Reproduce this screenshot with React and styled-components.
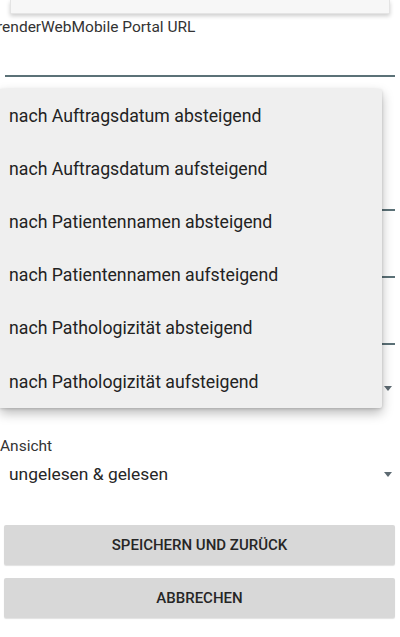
import React from "react";
import styled, { createGlobalStyle } from "styled-components";

const Global = createGlobalStyle`
  html, body { margin: 0; padding: 0; background: #ffffff; }
  body { font-family: Roboto, "Noto Sans", "Liberation Sans", sans-serif; overflow: hidden; }
  * { box-sizing: border-box; }
`;

const Page = styled.div`
  position: relative;
  width: 400px;
  height: 637px;
  overflow: hidden;
  background: #ffffff;
  display: flex;
  flex-direction: column;
`;

const TopCard = styled.div`
  height: 14px;
  margin: 0 10px;
  background: #f7f7f7;
  border: 1px solid #e4e4e4;
  border-top: none;
  box-shadow: 0 2px 4px rgba(0, 0, 0, 0.2);
  flex: none;
`;

const FieldLabel = styled.div`
  font-size: 15.5px;
  line-height: 16px;
  color: #333333;
  margin-top: ${(p) => p.$top || 0}px;
  margin-left: ${(p) => p.$left || 0}px;
  white-space: nowrap;
`;

const UnderlineField = styled.div`
  height: ${(p) => p.$h}px;
  margin: 0 5px;
  border-bottom: 2px solid #5b7177;
  flex: none;
`;

const SelectRow = styled.div`
  height: ${(p) => p.$h}px;
  display: flex;
  align-items: center;
  justify-content: space-between;
  padding: 0 8px 0 9px;
  font-size: 17.4px;
  color: #262626;
  flex: none;
`;

const Arrow = styled.span`
  width: 0;
  height: 0;
  border-left: 4.5px solid transparent;
  border-right: 4.5px solid transparent;
  border-top: 5px solid #5d6a72;
`;

const Buttons = styled.div`
  display: flex;
  flex-direction: column;
  gap: 13px;
  margin: 31px 5px 0 4px;
`;

const Button = styled.button`
  height: 40px;
  border: none;
  border-radius: 2px;
  background: #d8d8d8;
  box-shadow: 0 1px 1px rgba(0, 0, 0, 0.12);
  font-family: Roboto, "Liberation Sans", sans-serif;
  font-size: 15px;
  font-weight: 500;
  color: #262626;
  text-transform: uppercase;
  padding: 0;
`;

const Menu = styled.ul`
  position: absolute;
  left: 0;
  top: 89px;
  width: 382px;
  margin: 0;
  padding: 0;
  list-style: none;
  background: #efefef;
  border-radius: 0 2px 2px 0;
  box-shadow: 0 5px 12px rgba(0, 0, 0, 0.28), 0 1px 3px rgba(0, 0, 0, 0.15);
`;

const MenuItem = styled.li`
  height: 53.2px;
  display: flex;
  align-items: center;
  padding-left: 9px;
  font-size: 17.7px;
  color: #222222;
  white-space: nowrap;
`;

const options = [
  "nach Auftragsdatum absteigend",
  "nach Auftragsdatum aufsteigend",
  "nach Patientennamen absteigend",
  "nach Patientennamen aufsteigend",
  "nach Pathologizität absteigend",
  "nach Pathologizität aufsteigend",
];

export default function App() {
  return (
    <>
      <Global />
      <Page>
        <TopCard />
        <FieldLabel $top={5} $left={-3}>renderWebMobile Portal URL</FieldLabel>
        <UnderlineField $h={42} />
        <UnderlineField $h={134} />
        <UnderlineField $h={67} />
        <UnderlineField $h={67} />
        <SelectRow $h={86}>
          <span />
          <Arrow />
        </SelectRow>
        <FieldLabel $top={7}>Ansicht</FieldLabel>
        <SelectRow $h={40}>
          <span>ungelesen &amp; gelesen</span>
          <Arrow />
        </SelectRow>
        <Buttons>
          <Button>Speichern und zurück</Button>
          <Button>Abbrechen</Button>
        </Buttons>
        <Menu>
          {options.map((o) => (
            <MenuItem key={o}>{o}</MenuItem>
          ))}
        </Menu>
      </Page>
    </>
  );
}
